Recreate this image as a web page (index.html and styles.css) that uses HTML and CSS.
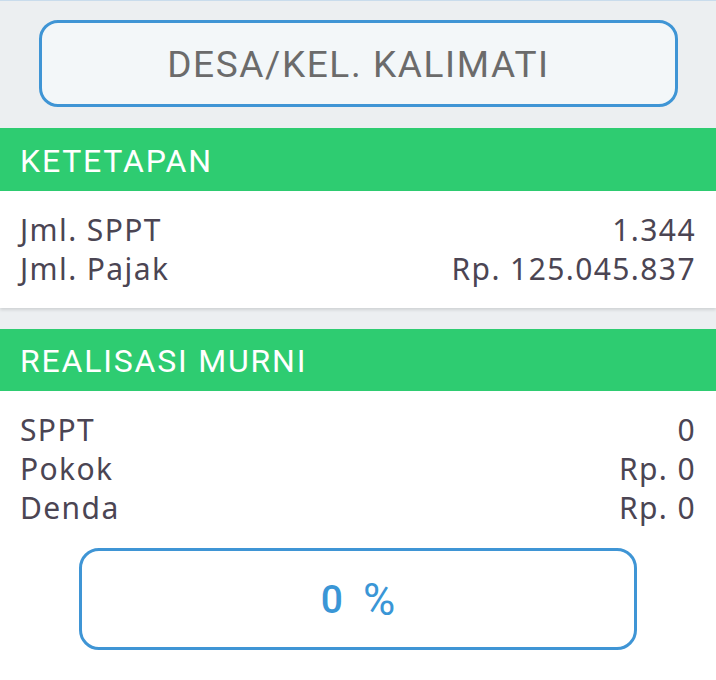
FILE: index.html
```html
<!DOCTYPE html>
<html lang="id">
<head>
<meta charset="utf-8">
<title>Desa/Kel. Kalimati</title>
<link rel="stylesheet" href="styles.css">
</head>
<body>
<div class="topline"></div>
<div class="top">
  <div class="desa-btn">DESA/KEL. KALIMATI</div>
</div>

<section class="section">
  <div class="head">KETETAPAN</div>
  <div class="card shadow">
    <div class="row"><span>Jml. SPPT</span><span>1.344</span></div>
    <div class="row"><span>Jml. Pajak</span><span>Rp. 125.045.837</span></div>
  </div>
</section>

<section class="section second">
  <div class="head">REALISASI MURNI</div>
  <div class="card last">
    <div class="row"><span>SPPT</span><span>0</span></div>
    <div class="row"><span>Pokok</span><span>Rp. 0</span></div>
    <div class="row"><span>Denda</span><span>Rp. 0</span></div>
    <div class="percent"><span>0</span><span class="pct">%</span></div>
  </div>
</section>
</body>
</html>
```

FILE: styles.css
```css
html, body {
  margin: 0;
  padding: 0;
}
body {
  width: 716px;
  height: 680px;
  overflow: hidden;
  background: #eceff1;
  font-family: "Noto Sans", "DejaVu Sans", sans-serif;
}
.topline {
  height: 1px;
  background: #c9dcec;
}
.top {
  padding: 19px 38px 21px 39px;
}
.desa-btn {
  box-sizing: border-box;
  height: 87px;
  border: 3px solid #3f95d5;
  border-radius: 19px;
  background: #f3f7f9;
  display: flex;
  align-items: center;
  justify-content: center;
  font-family: Roboto, "Liberation Sans", sans-serif;
  font-size: 37px;
  letter-spacing: 1.6px;
  color: #6b6b6b;
  padding-top: 1px;
}
.head {
  height: 63px;
  background: #2ecc71;
  color: #ffffff;
  font-family: Roboto, "Liberation Sans", sans-serif;
  font-size: 32px;
  letter-spacing: 1.8px;
  display: flex;
  align-items: center;
  padding-left: 20px;
  padding-top: 2px;
  box-sizing: border-box;
}
.card {
  background: #ffffff;
  padding: 19px 20px 20px 20px;
}
.shadow {
  box-shadow: 0 2px 3px rgba(0, 0, 0, 0.12);
}
.second {
  margin-top: 21px;
}
.second .head {
  height: 62px;
}
.last {
  padding-bottom: 40px;
}
.row {
  display: flex;
  justify-content: space-between;
  font-size: 30px;
  line-height: 39px;
  height: 39px;
  color: #4b4553;
  letter-spacing: 1.4px;
}
.percent {
  box-sizing: border-box;
  width: 558px;
  height: 102px;
  margin: 21px auto 0 auto;
  border: 3px solid #3f95d5;
  border-radius: 20px;
  display: flex;
  align-items: center;
  justify-content: center;
  gap: 20px;
  font-family: Roboto, "Liberation Sans", sans-serif;
  font-weight: 500;
  font-size: 39px;
  color: #3a96d6;
  padding-top: 2px;
}
.pct {
  font-size: 44px;
  font-weight: 400;
}
```
